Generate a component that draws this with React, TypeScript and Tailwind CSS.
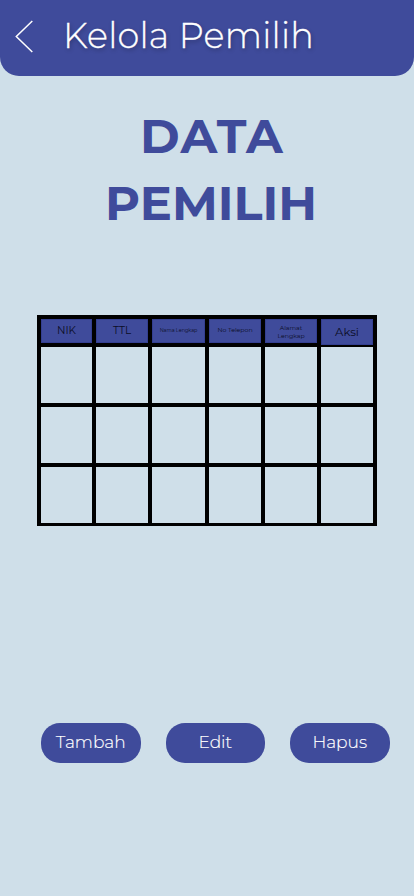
import React from "react";

const headers = [
  { label: "NIK", cls: "text-[10.4px]" },
  { label: "TTL", cls: "text-[10.4px]" },
  { label: "Nama Lengkap", cls: "text-[4.9px]" },
  { label: "No Telepon", cls: "text-[6.2px]" },
  { label: "Alamat\nLengkap", cls: "text-[6.2px] leading-[8px] pt-[3px]" },
  { label: "Aksi", cls: "text-[11.6px] pt-[3px]" },
];

const actions = ["Tambah", "Edit", "Hapus"];

const columns = "grid grid-cols-[51px_52px_53px_52px_52px_52px] gap-x-1";

export default function App() {
  return (
    <div className="h-[896px] w-[414px] overflow-hidden bg-[#cfdfe9] font-['Montserrat','Inter',sans-serif]">
      <header className="flex h-[76px] items-center rounded-b-[19px] bg-[#3f4b9b] pb-1 pl-[15px] text-white">
        <svg width="19" height="34" viewBox="0 0 19 34" fill="none" stroke="currentColor" strokeWidth="1.5">
          <path d="M17.3 2 1.3 17.5 17.3 33" />
        </svg>
        <h1 className="ml-[29px] whitespace-nowrap text-[35px] leading-10 font-light tracking-[0.25px] [-webkit-text-stroke:0.3px_white] [text-shadow:1px_2px_4px_rgba(0,0,0,0.3)]">
          Kelola Pemilih
        </h1>
      </header>

      <h2 className="mt-[27px] flex flex-col items-center text-[48px] leading-[67px] font-bold text-[#3f4b9b]">
        <span className="ml-[10px] tracking-[1.2px]">DATA</span>
        <span className="ml-[8px]">PEMILIH</span>
      </h2>

      <section className="mt-[78px] ml-[37px] w-[340px] bg-black px-1 pt-1 pb-[3.5px]">
        <div className={columns + " h-[24px]"}>
          {headers.map((h, i) => (
            <div
              key={h.label}
              className={
                "flex items-center justify-center border border-[#343f91] bg-[#3f4b9b] text-center text-[#0b0d25] " +
                (i === 5 ? "h-[26px]" : "h-[24px]")
              }
            >
              <span className={"-mt-px whitespace-pre " + h.cls}>{h.label}</span>
            </div>
          ))}
        </div>
        {["h-[56px]", "h-[56px]", "h-[55.5px]"].map((height, row) => (
          <div key={row} className={columns + " mt-1 " + height}>
            {headers.map((h) => (
              <div key={h.label} className="bg-[#cfdfe9]" />
            ))}
          </div>
        ))}
      </section>

      <nav className="mt-[197px] ml-[41px] flex gap-[25px]">
        {actions.map((label) => (
          <button
            key={label}
            className="flex h-10 w-[99.5px] items-center justify-center rounded-[19px] bg-[#3f4b9b] text-[17px] font-light text-white [-webkit-text-stroke:0.15px_white]"
          >
            {label}
          </button>
        ))}
      </nav>
    </div>
  );
}
